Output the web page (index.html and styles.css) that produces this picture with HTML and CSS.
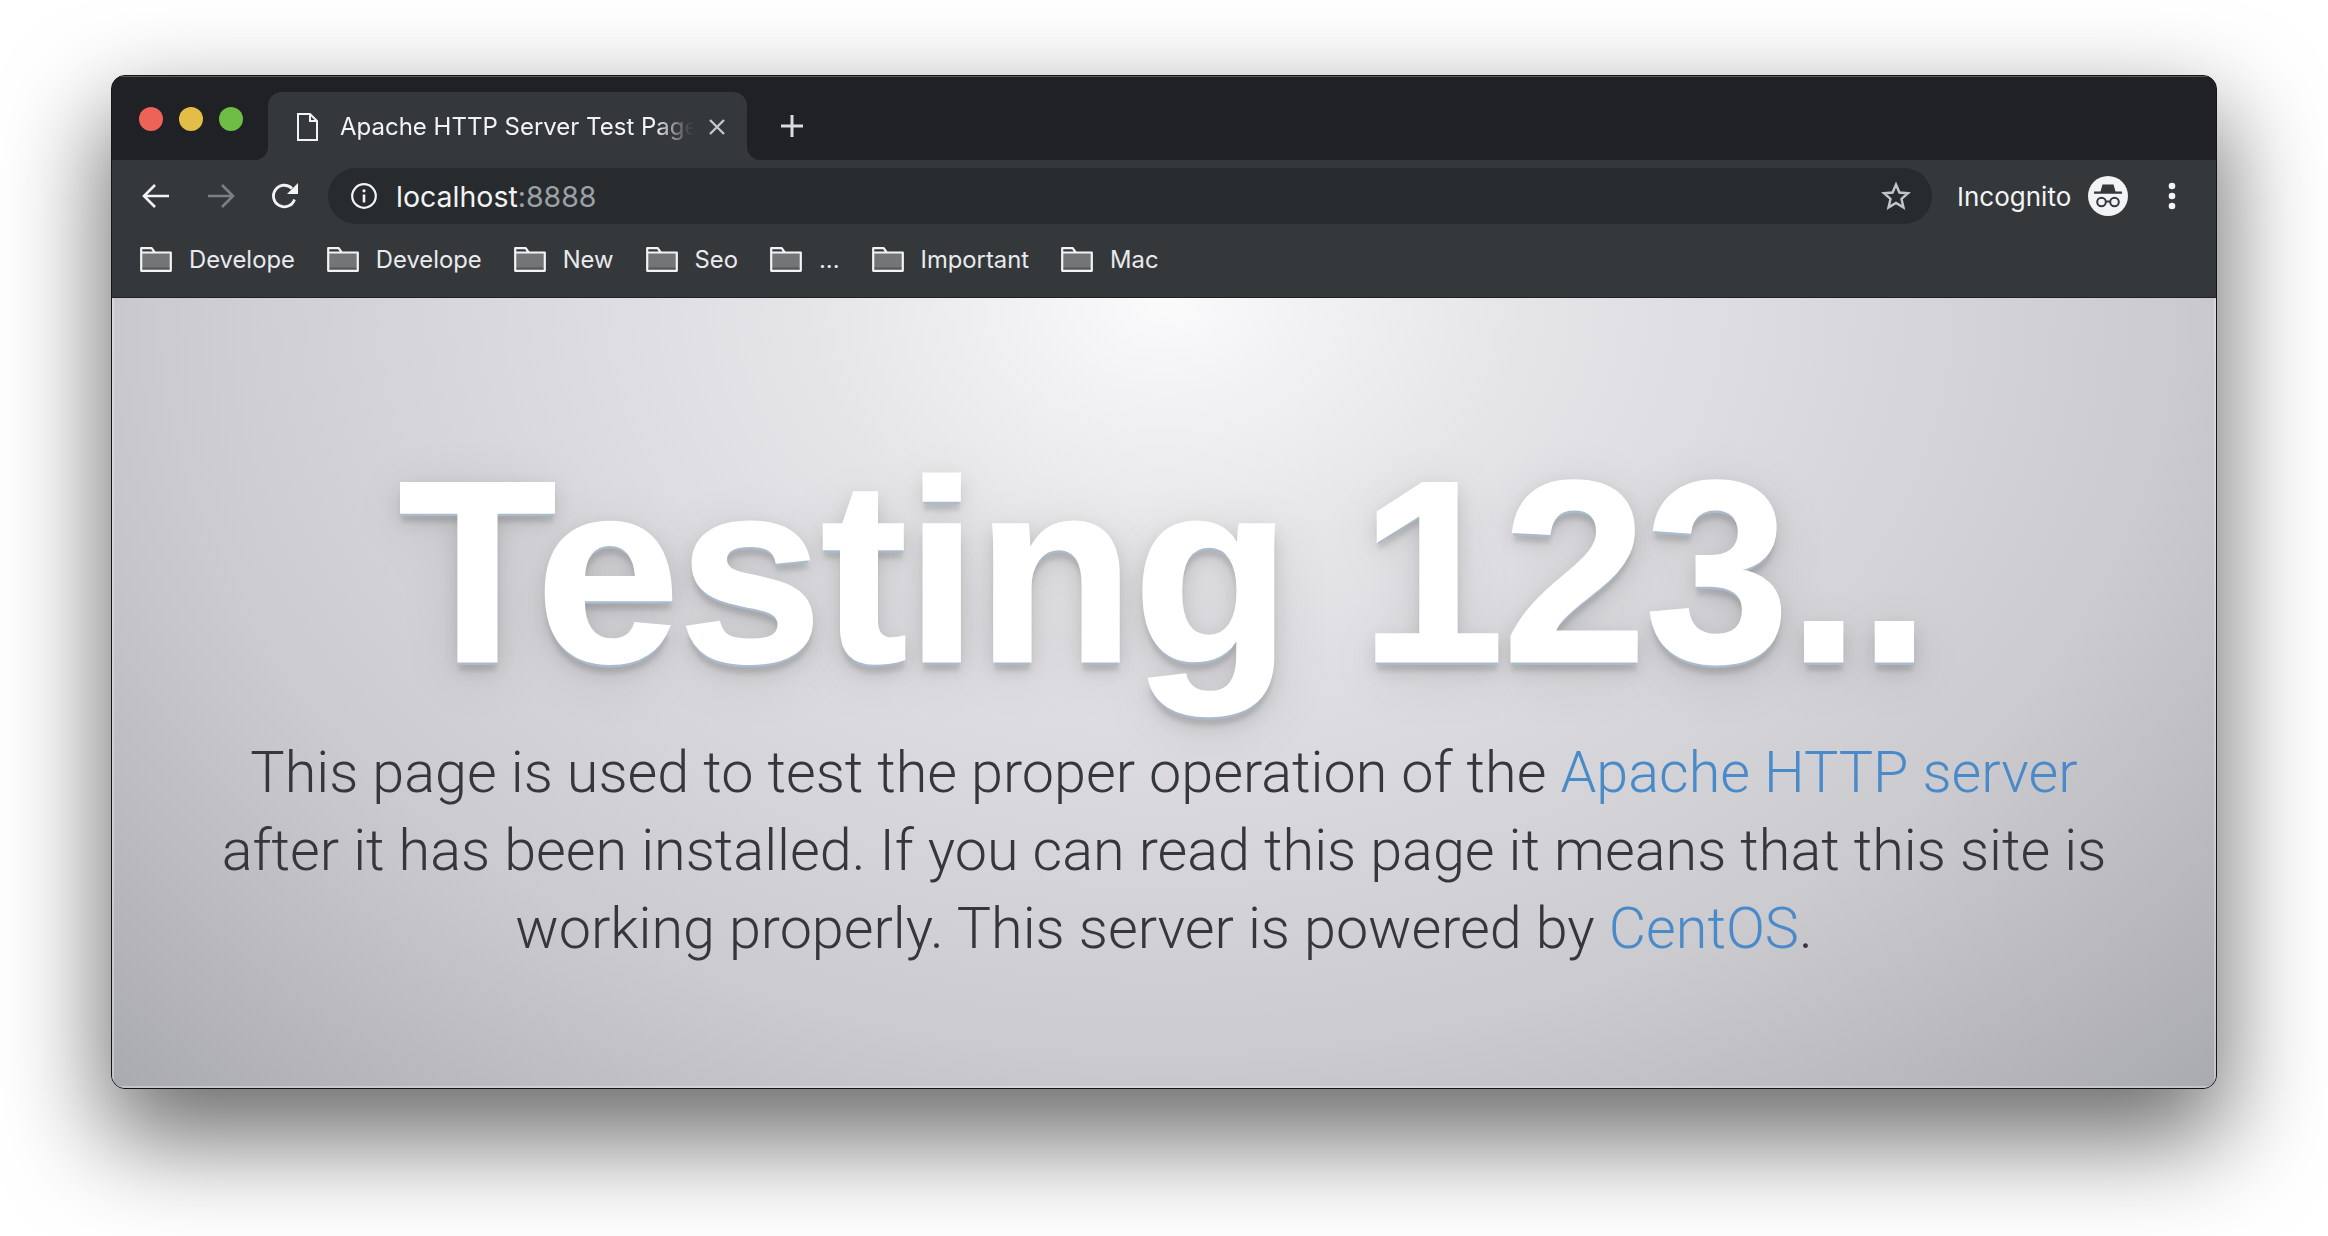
FILE: index.html
```html
<!DOCTYPE html>
<html lang="en">
<head>
<meta charset="utf-8">
<title>Apache HTTP Server Test Page</title>
<link rel="stylesheet" href="styles.css">
</head>
<body>
<main class="window">
  <header class="tabstrip">
    <div class="lights"><i class="light red"></i><i class="light yellow"></i><i class="light green"></i></div>
    <div class="tab">
      <svg class="doc" viewBox="0 0 21 28"><path d="M1 1h12l7 7v19H1z M13 1v7h7" fill="none" stroke="#f1f3f4" stroke-width="2"/></svg>
      <span class="tab-title">Apache HTTP Server Test Page</span>
      <svg class="close" viewBox="0 0 20 20"><path d="M3 3l14 14M17 3L3 17" stroke="#c4c7c9" stroke-width="2.4"/></svg>
    </div>
    <svg class="plus" viewBox="0 0 24 24"><path d="M12 1v22M1 12h22" stroke="#dadce0" stroke-width="3"/></svg>
  </header>
  <nav class="toolbar">
    <svg class="nav-icon" viewBox="0 0 28 26"><path d="M27 13H3M13 2L2 13l11 11" fill="none" stroke="#f1f3f4" stroke-width="2.6"/></svg>
    <svg class="nav-icon" viewBox="0 0 28 26"><path d="M1 13h24M15 2l11 11-11 11" fill="none" stroke="#7d8083" stroke-width="2.6"/></svg>
    <svg class="nav-icon reload" viewBox="0 0 28 28"><path d="M23.500 17.500A10.800 10.800 0 1 1 21 6.500" fill="none" stroke="#f1f3f4" stroke-width="2.800"/><path d="M27 1v11H16z" fill="#f1f3f4"/></svg>
    <div class="omnibox">
      <svg class="info" viewBox="0 0 26 26"><circle cx="13" cy="13" r="11.800" fill="none" stroke="#f1f3f4" stroke-width="2.200"/><path d="M13 11.500v8" stroke="#f1f3f4" stroke-width="2.600"/><circle cx="13" cy="7.800" r="1.600" fill="#f1f3f4"/></svg>
      <span class="url">localhost<span class="port">:8888</span></span>
      <svg class="star" viewBox="0 0 30 30"><path d="M15 3.500l3.400 8 8.600.7-6.500 5.700 2 8.500L15 21.900l-7.500 4.500 2-8.500L3 12.200l8.600-.7z" fill="none" stroke="#c3c6c9" stroke-width="2.400"/></svg>
    </div>
    <span class="incognito">Incognito</span>
    <svg class="avatar" viewBox="0 0 40 40"><circle cx="20" cy="20" r="20" fill="#f1f3f4"/><path d="M14.500 8.500h11l2 7H34v2.200H6v-2.200h6.500z" fill="#35383b"/><circle cx="13.500" cy="26" r="4.300" fill="none" stroke="#35383b" stroke-width="2"/><circle cx="26.500" cy="26" r="4.300" fill="none" stroke="#35383b" stroke-width="2"/><path d="M17.500 25.500h5" stroke="#35383b" stroke-width="2"/></svg>
    <svg class="menu" viewBox="0 0 8 28"><circle cx="4" cy="4" r="3.300" fill="#f1f3f4"/><circle cx="4" cy="14" r="3.300" fill="#f1f3f4"/><circle cx="4" cy="24" r="3.300" fill="#f1f3f4"/></svg>
  </nav>
  <nav class="bookmarks">
    <a class="bookmark"><svg class="folder" viewBox="0 0 32 25"><use href="#folder-shape"/></svg>Develope</a>
    <a class="bookmark"><svg class="folder" viewBox="0 0 32 25"><use href="#folder-shape"/></svg>Develope</a>
    <a class="bookmark"><svg class="folder" viewBox="0 0 32 25"><use href="#folder-shape"/></svg>New</a>
    <a class="bookmark"><svg class="folder" viewBox="0 0 32 25"><use href="#folder-shape"/></svg>Seo</a>
    <a class="bookmark"><svg class="folder" viewBox="0 0 32 25"><use href="#folder-shape"/></svg>...</a>
    <a class="bookmark"><svg class="folder" viewBox="0 0 32 25"><use href="#folder-shape"/></svg>Important</a>
    <a class="bookmark"><svg class="folder" viewBox="0 0 32 25"><use href="#folder-shape"/></svg>Mac</a>
  </nav>
  <section class="hero">
    <h1 class="headline">Testing 123..</h1>
    <p class="lead">This page is used to test the proper operation of the <a class="link">Apache HTTP server</a><br>after it has been installed. If you can read this page it means that this site is<br>working properly. This server is powered by <a class="link">CentOS</a>.</p>
  </section>
</main>
<svg class="defs" aria-hidden="true"><defs><g id="folder-shape"><path d="M1.200 5.500h29.600v18.300H1.200z" fill="#737577"/><path d="M1.200 20.500h29.600v3.300H1.200z" fill="#55585a"/><path d="M1.200 5.500V1.200h10.500l3 4.300h16.100v18.300H1.200zh29.600" fill="none" stroke="#f1f3f4" stroke-width="2.200" stroke-linejoin="round"/></g></defs></svg>
</body>
</html>
```
FILE: styles.css
```css
* { box-sizing: border-box; }
html, body { margin: 0; height: 100%; }
body {
  background: #fff;
  padding: 75px 111px 147px;
  overflow: hidden;
  font-family: "Liberation Sans", Arial, sans-serif;
}
.defs { position: absolute; width: 0; height: 0; }
.window {
  height: 1014px;
  border: 1px solid #141517;
  border-radius: 14px;
  overflow: hidden;
  display: flex;
  flex-direction: column;
  box-shadow: 0 44px 100px 6px rgba(0,0,0,.58);
  background: #35383b;
}
.tabstrip {
  height: 84px;
  flex: none;
  background: #202124;
  border-top: 1px solid #5a5b5d;
  display: flex;
  align-items: flex-start;
  padding: 15px 0 0 27px;
}
.lights { display: flex; gap: 16px; margin-top: 15px; width: 129px; }
.light { width: 24px; height: 24px; border-radius: 50%; display: block; }
.red { background: #ef6258; }
.yellow { background: #e2bd47; }
.green { background: #70bd46; }
.tab {
  position: relative;
  width: 479px;
  height: 68px;
  background: #35383b;
  border-radius: 14px 14px 0 0;
  display: flex;
  align-items: center;
  padding: 1px 0 0 29px;
  color: #f1f3f4;
}
.tab::before, .tab::after {
  content: "";
  position: absolute;
  bottom: 0;
  width: 14px;
  height: 14px;
}
.tab::before { left: -14px; background: radial-gradient(circle at 0 0, transparent 14px, #35383b 14.5px); }
.tab::after { right: -14px; background: radial-gradient(circle at 100% 0, transparent 14px, #35383b 14.5px); }
.doc { width: 21px; height: 28px; flex: none; }
.tab-title {
  font-family: "Inter", sans-serif;
  font-size: 24px;
  margin-left: 22px;
  width: 353px;
  flex: none;
  white-space: nowrap;
  -webkit-mask-image: linear-gradient(90deg, #000 315px, rgba(0,0,0,.05) 350px);
  mask-image: linear-gradient(90deg, #000 315px, rgba(0,0,0,.05) 350px);
}
.close { width: 20px; height: 20px; margin-left: 14px; flex: none; }
.plus { width: 24px; height: 24px; margin: 22px 0 0 33px; }
.toolbar {
  height: 76px;
  flex: none;
  display: flex;
  align-items: center;
  padding: 0 0 4px 30px;
  background: #35383b;
}
.nav-icon { width: 28px; height: 26px; margin-right: 9px; flex: none; }
.nav-icon + .nav-icon { margin-left: 28px; }
.nav-icon.reload { margin-left: 27px; height: 28px; margin-right: 29px; }
.omnibox {
  width: 1604px;
  height: 56px;
  border-radius: 28px;
  background: #282b2e;
  display: flex;
  align-items: center;
  padding: 0 21px 0 23px;
  flex: none;
}
.info { width: 26px; height: 26px; flex: none; }
.url {
  font-family: "Inter", sans-serif;
  font-size: 28.500px;
  color: #f1f3f4;
  margin-left: 19px;
  flex: 1;
}
.port { color: #9aa0a6; }
.star { width: 30px; height: 30px; flex: none; }
.incognito {
  font-family: "Inter", sans-serif;
  font-size: 26px;
  color: #f1f3f4;
  margin-left: 25px;
  width: 131px;
  flex: none;
}
.avatar { width: 40px; height: 40px; flex: none; }
.menu { width: 8px; height: 28px; margin-left: 40px; flex: none; }
.bookmarks {
  height: 62px;
  flex: none;
  display: flex;
  align-items: flex-start;
  gap: 32px;
  padding: 9px 0 0 28px;
  background: #35383b;
  border-bottom: 1px solid #1e2022;
}
.bookmark {
  display: flex;
  align-items: center;
  gap: 17px;
  font-family: "Inter", sans-serif;
  font-size: 23.800px;
  color: #e8eaed;
}
.folder { width: 32px; height: 25px; flex: none; }
.hero {
  flex: 1;
  text-align: center;
  background: radial-gradient(ellipse 1500px 1120px at 50% 0, #fbfbfc 0, #f2f2f4 9%, #e5e5e8 24%, #dadade 43%, #cacacf 68%, #a9aaaf 100%);
  box-shadow: inset 2px 0 0 rgba(255,255,255,.3), inset -2px 0 0 rgba(255,255,255,.3), inset 0 -2px 0 rgba(255,255,255,.3);
  overflow: hidden;
}
.headline {
  margin: 126px 0 0;
  font-size: 258px;
  line-height: 296px;
  font-weight: 700;
  letter-spacing: -1px;
  color: #fff;
  -webkit-text-stroke: 3px #fff;
  text-shadow: 0 4px 0 #aabbcc, 0 8px 20px rgba(0,0,0,.15), 0 10px 4px rgba(0,0,0,.1), 0 12px 60px rgba(0,0,0,.1);
}
.lead {
  margin: 14px 0 0;
  font-family: "Roboto", "Liberation Sans", sans-serif;
  font-weight: 300;
  font-size: 57.500px;
  line-height: 78px;
  color: #35373b;
}
.link { color: #4a8ac9; }
```
